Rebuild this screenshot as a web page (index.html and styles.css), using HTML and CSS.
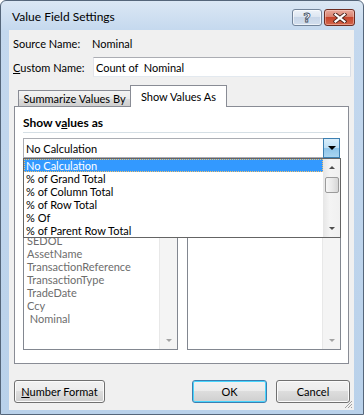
FILE: index.html
```html
<!DOCTYPE html>
<html lang="en">
<head>
    <meta charset="UTF-8">
    <title>Value Field Settings</title>
    <link rel="stylesheet" href="styles.css">
</head>
<body>
    <div class="window">
        <div class="titlebar">
            <div class="title">Value Field Settings</div>
            <div class="caption-btns">
                <button class="cap-btn help"><span>?</span></button>
                <button class="cap-btn close">
                    <svg width="14" height="10" viewBox="0 0 14 10">
                        <path d="M2.5 1.5 L11.5 8.5 M11.5 1.5 L2.5 8.5" stroke="#4a231c" stroke-width="4" stroke-linecap="square" fill="none"/>
                        <path d="M2.5 1.5 L11.5 8.5 M11.5 1.5 L2.5 8.5" stroke="#fff" stroke-width="2.2" stroke-linecap="square" fill="none"/>
                    </svg>
                </button>
            </div>
        </div>

        <div class="client">
            <div class="fields">
                <div class="field-row">
                    <span class="field-label">Source Name:</span>
                    <span class="field-value">Nominal</span>
                </div>
                <div class="field-row">
                    <label class="field-label" for="custom-name"><u>C</u>ustom Name:</label>
                    <input type="text" id="custom-name" value="Count of  Nominal">
                </div>
            </div>

            <div class="tabstrip">
                <div class="tab">Summarize Values By</div>
                <div class="tab active">Show Values As</div>
            </div>

            <div class="panel">
                <div class="group-title">Show v<u>a</u>lues as</div>

                <div class="combo-wrap">
                    <div class="combo">
                        <span class="combo-text">No Calculation</span>
                        <span class="combo-btn"><i class="arrow-down dark"></i></span>
                    </div>
                    <div class="dropdown">
                        <ul class="dropdown-list">
                            <li class="selected">No Calculation</li>
                            <li>% of Grand Total</li>
                            <li>% of Column Total</li>
                            <li>% of Row Total</li>
                            <li>% Of</li>
                            <li>% of Parent Row Total</li>
                        </ul>
                        <div class="scrollbar">
                            <span class="sb-arrow"><i class="arrow-up"></i></span>
                            <span class="sb-thumb"></span>
                            <span class="sb-track"></span>
                            <span class="sb-arrow"><i class="arrow-down"></i></span>
                        </div>
                    </div>
                </div>

                <!-- base field / base item lists, top part sits under the open dropdown -->
                <div class="base">
                    <div class="listbox">
                        <ul class="list-items">
                            <li>SEDOL</li>
                            <li>AssetName</li>
                            <li>TransactionReference</li>
                            <li>TransactionType</li>
                            <li>TradeDate</li>
                            <li>Ccy</li>
                            <li>&nbsp;Nominal</li>
                        </ul>
                        <div class="scrollbar disabled">
                            <span class="sb-track"></span>
                            <span class="sb-arrow"><i class="arrow-down light"></i></span>
                        </div>
                    </div>
                    <div class="listbox">
                        <ul class="list-items"></ul>
                        <div class="scrollbar disabled">
                            <span class="sb-track"></span>
                            <span class="sb-arrow"><i class="arrow-down light"></i></span>
                        </div>
                    </div>
                </div>
            </div>

            <div class="footer">
                <button class="btn wide"><u>N</u>umber Format</button>
                <button class="btn default">OK</button>
                <button class="btn">Cancel</button>
            </div>

            <svg class="grip" width="10" height="10" viewBox="0 0 10 10">
                <path d="M9 2 L2 9 M9 5 L5 9 M9 8 L8 9" stroke="#a0a0a0" stroke-width="1" fill="none"/>
            </svg>
        </div>
    </div>
</body>
</html>
```

FILE: styles.css
```css
body {
    margin: 0;
    font-family: Lato, "Liberation Sans", sans-serif;
    font-size: 11px;
    color: #000;
    background: #fff;
}

ul {
    list-style: none;
    margin: 0;
    padding: 0;
}

.window {
    width: 364px;
    height: 415px;
    box-sizing: border-box;
    border: 1px solid #55667a;
    border-radius: 6px 6px 0 0;
    background: linear-gradient(#dbe7f4 0, #c4d8ee 30px, #b9d1ea 100%);
    display: flex;
    flex-direction: column;
}

/* title bar */
.titlebar {
    height: 29px;
    box-sizing: border-box;
    display: flex;
    justify-content: space-between;
    align-items: flex-start;
    padding: 8px 8px 0 11px;
}

.title {
    font-size: 12px;
    line-height: 16px;
}

.caption-btns {
    display: flex;
    gap: 2px;
}

.cap-btn {
    height: 17px;
    box-sizing: border-box;
    border-radius: 3px;
    padding: 0;
    display: flex;
    align-items: center;
    justify-content: center;
}

.cap-btn.help {
    width: 30px;
    border: 1px solid #72849a;
    background: linear-gradient(#eef3f9, #dde6f1 45%, #c8d6e8 50%, #d3dfee);
    box-shadow: inset 0 0 0 1px rgba(255,255,255,0.6);
}

.cap-btn.help span {
    font-family: "DejaVu Sans", sans-serif;
    font-weight: bold;
    font-size: 13px;
    line-height: 13px;
    color: #fff;
    -webkit-text-stroke: 0.8px #3d4e62;
}

.cap-btn.close {
    width: 31px;
    border: 1px solid #6d2d22;
    background: linear-gradient(#eaa99b, #d98472 45%, #c7452c 50%, #d2664c);
    box-shadow: inset 0 0 0 1px rgba(255,220,210,0.45);
}

/* client area */
.client {
    flex: 1;
    margin: 0 9px 4px 8px;
    background: #f0f0f0;
    display: flex;
    flex-direction: column;
    position: relative;
}

.fields {
    display: flex;
    flex-direction: column;
    gap: 4px;
    padding: 3px 3px 0 4px;
}

.field-row {
    display: flex;
    align-items: center;
    height: 20px;
}

.field-label {
    width: 79px;
    flex-shrink: 0;
}

.field-row input {
    flex: 1;
    height: 20px;
    box-sizing: border-box;
    margin: 0 0 0 1px;
    border: 1px solid #abadb3;
    border-left-color: #e2e3ea;
    border-right-color: #dbdfe6;
    border-bottom-color: #e3e9ef;
    padding: 0 2px;
    font: inherit;
    color: #000;
    background: #fff;
}

/* tabs */
.tabstrip {
    display: flex;
    align-items: flex-end;
    height: 21px;
    margin: 8px 5px 0;
    padding-left: 4px;
}

.tab {
    width: 113px;
    height: 16px;
    box-sizing: border-box;
    margin-right: -1px;
    border: 1px solid #898c95;
    border-bottom: none;
    background: linear-gradient(#f3f3f3, #ebebeb 50%, #dddddd 50%, #cfcfcf);
    text-align: center;
    line-height: 15px;
    white-space: nowrap;
}

.tab.active {
    width: 97px;
    height: 22px;
    margin: 0 0 -1px 0;
    background: #fff;
    line-height: 21px;
    position: relative;
    z-index: 1;
}

/* panel */
.panel {
    margin: 0 5px;
    height: 258px;
    box-sizing: border-box;
    border: 1px solid #898c95;
    background: #fff;
    padding: 0 8px;
}

.group-title {
    font-size: 12px;
    font-weight: bold;
    line-height: 16px;
    padding: 8px 0 1px;
    border-bottom: 1px solid #d5dfe5;
}

.combo-wrap {
    position: relative;
    margin-top: 5px;
    z-index: 2;
}

.combo {
    height: 20px;
    box-sizing: border-box;
    border: 1px solid #abadb3;
    border-right: none;
    display: flex;
    align-items: center;
}

.combo-text {
    flex: 1;
    padding-left: 2px;
}

.combo-btn {
    width: 17px;
    height: 20px;
    box-sizing: border-box;
    margin-top: -1px;
    border: 1px solid #3c7fb1;
    background: linear-gradient(#d9eefb, #bfe0f5 48%, #8fc5e9 52%, #a9d5f1);
    display: flex;
    align-items: center;
    justify-content: center;
}

.arrow-down,
.arrow-up {
    display: block;
    width: 0;
    height: 0;
    border-left: 3px solid transparent;
    border-right: 3px solid transparent;
}

.arrow-down {
    border-top: 3px solid #4d4d4d;
}

.arrow-up {
    border-bottom: 3px solid #4d4d4d;
}

.arrow-down.dark {
    border-left-width: 4px;
    border-right-width: 4px;
    border-top: 4px solid #000;
}

.arrow-down.light {
    border-top-color: #a3a3a3;
}

.dropdown {
    position: absolute;
    top: 100%;
    left: 0;
    right: -1px;
    height: 80px;
    box-sizing: border-box;
    border: 1px solid #646464;
    background: #fff;
    display: flex;
}

.dropdown-list {
    flex: 1;
}

.dropdown-list li {
    height: 13px;
    line-height: 13px;
    padding-left: 2px;
    white-space: nowrap;
}

.dropdown-list li.selected {
    background: #3399ff;
    color: #fff;
    outline: 1px dotted #f5c26b;
    outline-offset: -1px;
}

.scrollbar {
    width: 17px;
    display: flex;
    flex-direction: column;
    background: linear-gradient(to right, #e6e6e6, #f4f4f4 40%, #f0f0f0);
}

.sb-arrow {
    height: 17px;
    display: flex;
    align-items: center;
    justify-content: center;
}

.sb-thumb {
    height: 16px;
    margin: 1px 1px 0 2px;
    box-sizing: border-box;
    border: 1px solid #9b9b9b;
    border-radius: 2px;
    background: linear-gradient(to right, #f6f6f6, #e9e9e9 50%, #d6d6d6);
}

.sb-track {
    flex: 1;
}

.scrollbar.disabled {
    background: #f4f4f4;
    border-left: 1px solid #e8e8e8;
}

/* base field / item lists */
.base {
    display: grid;
    grid-template-columns: 155px 154px;
    gap: 9px;
    margin-top: 22px;
}

.listbox {
    height: 170px;
    box-sizing: border-box;
    border: 1px solid #828790;
    display: flex;
    overflow: hidden;
}

.list-items {
    flex: 1;
    padding: 53px 0 0 3px;
    color: #6d6d6d;
}

.list-items li {
    line-height: 13px;
    white-space: nowrap;
}

/* footer buttons */
.footer {
    display: flex;
    gap: 9px;
    margin-top: 16px;
    padding: 0 4px 0 5px;
}

.btn {
    width: 74px;
    height: 23px;
    box-sizing: border-box;
    border: 1px solid #707070;
    border-radius: 3px;
    background: linear-gradient(#f2f2f2, #ebebeb 50%, #dddddd 50%, #cfcfcf);
    box-shadow: inset 0 0 0 1px #fbfbfb;
    font: inherit;
    color: #000;
    padding: 0;
}

.btn.wide {
    width: 91px;
    margin-right: auto;
}

.btn.default {
    width: 75px;
    border-color: #3c7fb1;
    box-shadow: inset 0 0 0 1px #48d5fd;
}

.grip {
    position: absolute;
    right: 1px;
    bottom: 1px;
}
```
